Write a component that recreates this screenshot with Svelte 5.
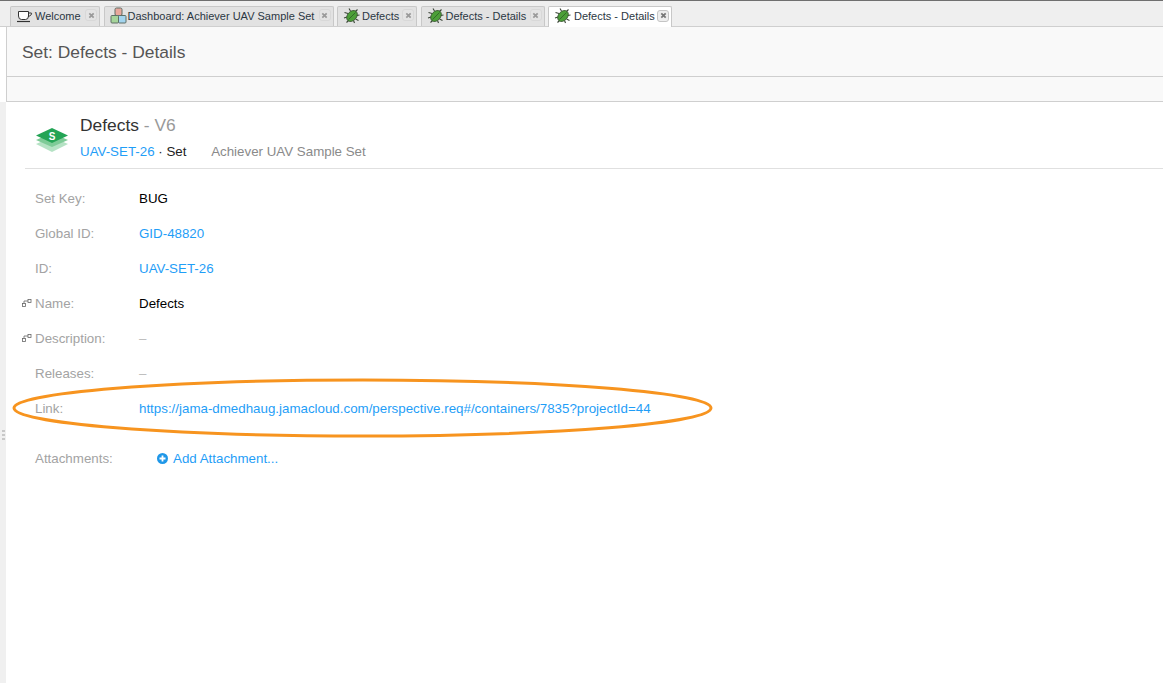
<script>
  const tabs = [
    { label: 'Welcome', icon: 'cup', width: 90 },
    { label: 'Dashboard: Achiever UAV Sample Set', icon: 'dash', width: 230 },
    { label: 'Defects', icon: 'bug', width: 80 },
    { label: 'Defects - Details', icon: 'bug', width: 124 },
    { label: 'Defects - Details', icon: 'bug', width: 124, active: true }
  ];
  const fields = [
    { label: 'Set Key:', value: 'BUG' },
    { label: 'Global ID:', value: 'GID-48820', link: true },
    { label: 'ID:', value: 'UAV-SET-26', link: true },
    { label: 'Name:', value: 'Defects', sync: true },
    { label: 'Description:', value: '–', sync: true, empty: true },
    { label: 'Releases:', value: '–', empty: true },
    { label: 'Link:', value: 'https://jama-dmedhaug.jamacloud.com/perspective.req#/containers/7835?projectId=44', link: true }
  ];
</script>

<div class="page">
  <div class="tabbar">
    {#each tabs as tab}
      <div class="tab" class:active={tab.active} style="width:{tab.width}px">
        {#if tab.icon === 'cup'}
          <svg class="ticon" width="18" height="16" viewBox="0 0 18 16">
            <path d="M2.500 3.500h10v4.500q0 3.500-3 3.500h-4q-3 0-3-3.500z" fill="#fff" stroke="#333" stroke-width="1"/>
            <path d="M12.500 5h2.500q1 0 .5 1l-1 1.500q-.5.5-2.500.8" fill="none" stroke="#333" stroke-width="1"/>
            <path d="M1 13.500h13" stroke="#333" stroke-width="1.200"/>
          </svg>
        {:else if tab.icon === 'dash'}
          <svg class="ticon" width="17" height="17" viewBox="0 0 17 17">
            <rect x="5" y="1" width="7" height="7.500" rx="1.500" fill="#e8a79c" stroke="#5f6f66"/>
            <rect x="1" y="8.500" width="7.500" height="7.500" rx="1" fill="#a5d49a" stroke="#5f6f66"/>
            <rect x="8.500" y="8.500" width="7.500" height="7.500" rx="1" fill="#a3d4ee" stroke="#5f6f66"/>
          </svg>
        {:else}
          <svg class="ticon" width="18" height="18" viewBox="0 0 18 18">
            <g stroke="#3a4437" stroke-width="1.100" fill="none">
              <path d="M5 6.500 1.500 5.500M4 10 1 11M6 13 3.500 15.500M12 5 14.500 2.500M13.500 8.500l3-.5M12.500 12l3 1.500M7.500 4 6 1.500M10.500 13.500l1 2.500"/>
            </g>
            <ellipse cx="9" cy="9" rx="4.500" ry="6.200" transform="rotate(42 9 9)" fill="#4c9f38" stroke="#35532d" stroke-width=".8"/>
            <path d="M5.500 12.500 12.500 5.500" stroke="#2d5d27" stroke-width=".8"/>
          </svg>
        {/if}
        <span class="tlabel">{tab.label}</span>
        <span class="close">
          <svg width="7" height="7" viewBox="0 0 8 8"><path d="M1.500 1.500l5 5M6.500 1.500l-5 5" stroke="#9a9a9a" stroke-width="2"/></svg>
        </span>
      </div>
    {/each}
  </div>

  <div class="header"><h1>Set: Defects - Details</h1></div>
  <div class="toolbar"></div>

  <main class="content">
    <div class="summary">
      <svg class="set-icon" width="34" height="26" viewBox="0 0 34 26">
        <path d="M17 10 33 17 17 25 1 17z" fill="#b5e2c4"/>
        <path d="M17 6 33 13 17 20 1 13z" fill="#7ecb97"/>
        <path d="M17 1 33 8.500 17 16 1 8.500z" fill="#23a455"/>
        <text x="17" y="12.500" class="s">S</text>
      </svg>
      <div>
        <div class="title">Defects <span class="ver">- V6</span></div>
        <div class="sub"><a href="#top">UAV-SET-26</a> <span class="dot">·</span> Set <span class="project">Achiever UAV Sample Set</span></div>
      </div>
    </div>

    <div class="fields">
      {#each fields as f}
        <div class="row">
          {#if f.sync}
            <svg class="sync" width="10" height="8" viewBox="0 0 10 8">
              <rect x=".5" y="4.500" width="3" height="3" fill="none" stroke="#666" stroke-width=".8"/>
              <rect x="6" y=".5" width="3" height="3" fill="none" stroke="#666" stroke-width=".8"/>
              <path d="M2 4.500V2h4" fill="none" stroke="#666" stroke-width=".8"/>
            </svg>
          {/if}
          <span class="label">{f.label}</span>
          {#if f.link}
            <a href="#top">{f.value}</a>
          {:else}
            <span class:empty={f.empty}>{f.value}</span>
          {/if}
        </div>
      {/each}
      <div class="row attach">
        <span class="label">Attachments:</span>
        <a class="add" href="#top">
          <svg width="11" height="11" viewBox="0 0 11 11">
            <circle cx="5.500" cy="5.500" r="5.500" fill="#1f97e8"/>
            <path d="M5.500 2.500v6M2.500 5.500h6" stroke="#fff" stroke-width="1.800"/>
          </svg>
          Add Attachment...
        </a>
      </div>
    </div>

    <div class="grip"><i></i><i></i><i></i></div>
  </main>

  <svg class="ring" width="1163" height="683" viewBox="0 0 1163 683">
    <ellipse cx="362.500" cy="408" rx="348.500" ry="28" fill="none" stroke="#f7941f" stroke-width="3"/>
  </svg>
</div>

<style>
  :global(body) {
    margin: 0;
    background: #fff;
    overflow: hidden;
  }
  .page {
    position: relative;
    width: 1163px;
    height: 683px;
    overflow: hidden;
    font-family: "Liberation Sans", Arial, sans-serif;
    font-size: 13.330px;
    color: #000;
  }
  .tabbar {
    display: flex;
    gap: 3.500px;
    box-sizing: border-box;
    height: 27px;
    padding: 5px 0 0 10px;
    background: #efefef;
    border-top: 1px solid #6f6f6f;
    border-bottom: 1px solid #cfcfcf;
  }
  .tab {
    display: flex;
    align-items: center;
    box-sizing: border-box;
    height: 20px;
    padding: 0 2px 2px 5px;
    background: #e2e2e2;
    border: 1px solid #c8c8c8;
    border-bottom: none;
    border-radius: 2px 2px 0 0;
    font-size: 11px;
    color: #2b3742;
    white-space: nowrap;
  }
  .tab.active {
    height: 21px;
    background: #fff;
  }
  .ticon { flex: none; margin-right: 1px; }
  .tab.active .ticon { margin-right: 2px; }
  .tlabel { flex: 1; }
  .close {
    display: flex;
    align-items: center;
    justify-content: center;
    flex: none;
    width: 10px;
    height: 10px;
    margin-bottom: 1px;
    background: #e4e4e4;
    border: 1px solid #d8d8d8;
    border-radius: 3px;
  }
  .tab.active .close { background: #eee; border-color: #c4c4c4; }
  .tab.active .close path { stroke: #777; }
  .header {
    box-sizing: border-box;
    height: 50px;
    margin-left: 6px;
    padding: 2px 0 0 15px;
    display: flex;
    align-items: center;
    background: #f9f9f9;
    border-left: 1px solid #cfcfcf;
    border-bottom: 1px solid #cfcfcf;
  }
  h1 {
    margin: 0;
    font-size: 17.400px;
    font-weight: 400;
    color: #555;
  }
  .toolbar {
    box-sizing: border-box;
    height: 25px;
    margin-left: 6px;
    background: #f9f9f9;
    border-left: 1px solid #cfcfcf;
    border-bottom: 1px solid #cfcfcf;
  }
  .content {
    position: relative;
    box-sizing: border-box;
    height: 581px;
    border-left: 6px solid #f0f0f0;
  }
  .summary {
    display: flex;
    box-sizing: border-box;
    height: 67px;
    margin-left: 19px;
    padding: 13px 0 0 10px;
    gap: 11px;
    border-bottom: 1px solid #e0e0e0;
  }
  .set-icon { margin-top: 12px; }
  .title { font-size: 17.400px; line-height: 20px; color: #333; }
  .ver { color: #999; }
  .sub { margin-top: 9px; line-height: 15px; color: #222; }
  .dot { color: #222; }
  .project { margin-left: 21px; color: #8a8a8a; }
  a { color: #1f9ef7; text-decoration: none; }
  .fields { padding: 12px 0 0 29px; }
  .row {
    position: relative;
    display: flex;
    align-items: center;
    height: 35px;
  }
  .label { flex: none; width: 104px; color: #a3a3a3; }
  .empty { color: #bbb; }
  .sync { position: absolute; left: -13px; top: 13px; }
  .attach { margin-top: 15px; }
  .add {
    display: flex;
    align-items: center;
    gap: 5px;
    margin-left: 18px;
  }
  .grip {
    position: absolute;
    left: -4px;
    top: 328px;
    display: grid;
    gap: 2px;
  }
  .grip i { display: block; width: 3px; height: 2px; background: #c8c8c8; }
  .ring { position: absolute; left: 0; top: 0; pointer-events: none; }
  .s {
    font-family: "Liberation Sans", Arial, sans-serif;
    font-size: 10px;
    font-weight: 700;
    fill: #fff;
    text-anchor: middle;
  }
</style>
